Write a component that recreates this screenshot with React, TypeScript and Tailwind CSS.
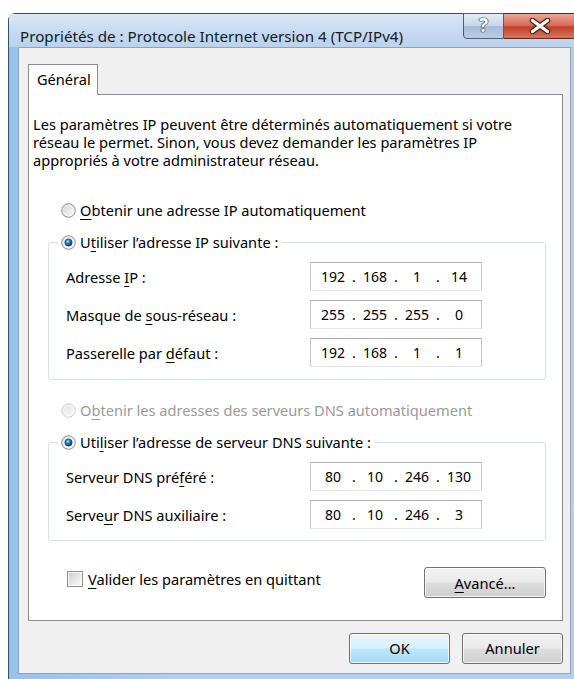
import React from 'react';

// Windows 7 style radio, drawn as a small glossy circle
const Radio: React.FC<{ checked?: boolean; disabled?: boolean }> = ({ checked, disabled }) => (
  <svg width="15" height="15" viewBox="0 0 15 15" className="shrink-0">
    <defs>
      <linearGradient id="radioFace" x1="0" y1="0" x2="1" y2="1">
        <stop offset="0" stopColor="#d2d4d6" />
        <stop offset="1" stopColor="#fbfbfb" />
      </linearGradient>
      <radialGradient id="radioDot" cx="0.4" cy="0.35" r="0.7">
        <stop offset="0" stopColor="#9fe0ff" />
        <stop offset="0.35" stopColor="#2f8cc4" />
        <stop offset="1" stopColor="#0c3350" />
      </radialGradient>
    </defs>
    <circle cx="7.5" cy="7.5" r="6.8" fill="url(#radioFace)" stroke={disabled ? '#c4c6c8' : '#8e9193'} strokeWidth="1" opacity={disabled ? 0.7 : 1} />
    <circle cx="7.5" cy="7.5" r="5.3" fill="none" stroke="#ffffff" strokeOpacity="0.6" strokeWidth="0.8" />
    {checked && <circle cx="7.5" cy="7.5" r="3.6" fill="url(#radioDot)" stroke="#11324e" strokeWidth="0.6" />}
  </svg>
);

const U: React.FC<{ children: React.ReactNode }> = ({ children }) => (
  <span className="underline decoration-1 underline-offset-[3px]">{children}</span>
);

const IpBox: React.FC<{ parts: string[] }> = ({ parts }) => (
  <div className="flex h-[29px] w-[172px] items-center border border-[#c5c8ce] border-t-[#abadb3] border-b-[#e3e9ef] bg-white pl-[5px] text-[14px]">
    {parts.map((p, i) => (
      <React.Fragment key={i}>
        {i > 0 && <span className="w-[8px] text-center">.</span>}
        <span className="w-[34px] text-center">{p}</span>
      </React.Fragment>
    ))}
  </div>
);

const Row: React.FC<{ label: React.ReactNode; parts: string[] }> = ({ label, parts }) => (
  <div className="flex items-center">
    <div className="w-[244px]">{label}</div>
    <IpBox parts={parts} />
  </div>
);

const btn =
  'flex items-center justify-center rounded-[3px] border text-[14.6px] shadow-[inset_0_0_0_1px_rgba(255,255,255,0.75)]';
const grayBtn =
  'border-[#707070] bg-[linear-gradient(to_bottom,#f2f2f2_0%,#ebebeb_48%,#dddddd_52%,#cfcfcf_100%)]';

export default function App() {
  return (
    <div className="h-[679px] w-[574px] overflow-hidden bg-white pl-[8px] pt-[13px] font-['Noto_Sans',sans-serif] text-black">
      {/* window frame */}
      <div className="h-[680px] w-[590px] rounded-tl-[7px] rounded-tr-[7px] border border-[#3e4e62] bg-[linear-gradient(to_right,#98c1ec_0%,#b2cfee_30%,#b4cdea_100%)]">
        {/* title bar */}
        <div className="flex h-[33px] items-start bg-[linear-gradient(to_bottom,#d9e7f6_0%,#c4d9f0_60%,#b9d2ee_100%)]">
          <span className="ml-[11px] mt-[12px] text-[15.2px] leading-[20px] text-[#111a24]">
            Propriétés de : Protocole Internet version 4 (TCP/IPv4)
          </span>
          <div className="ml-auto mr-[21px] mt-[-1px] flex h-[26px]">
            <div className="flex w-[41px] items-center justify-center rounded-bl-[4px] border border-[#4f5e72] bg-[linear-gradient(to_bottom,#e4edf7_0%,#c6d7ea_50%,#a7bdd6_52%,#b9cde3_100%)] pb-[1px] text-[19px] font-bold leading-none text-white [text-shadow:0_0_1px_#26364a,0_0_1px_#26364a,0_0_1px_#26364a,0_0_1px_#26364a]">
              ?
            </div>
            <div className="flex w-[72px] items-center justify-center rounded-br-[4px] border border-l-0 border-[#5a2a22] bg-[linear-gradient(to_bottom,#e9a795_0%,#d9705a_45%,#c3412b_55%,#d6755c_100%)]">
              <svg width="22" height="16" viewBox="0 0 22 16">
                <path d="M3.5 2.5 L18.5 13.5 M18.5 2.5 L3.5 13.5" stroke="#3a1a14" strokeWidth="5.5" strokeLinecap="round" />
                <path d="M3.5 2.5 L18.5 13.5 M18.5 2.5 L3.5 13.5" stroke="#ffffff" strokeWidth="3.4" strokeLinecap="round" />
              </svg>
            </div>
          </div>
        </div>

        {/* client area */}
        <div className="ml-[9px] h-[627px] w-[553px] border border-[#8fa3bb] bg-[#f0f0f0] pl-[9px] pt-[16px] text-[14.6px]">
          <div className="relative z-10 -mb-px flex h-[31px] w-[70px] items-center border border-b-0 border-[#898c95] bg-white pl-[8px]">
            Général
          </div>

          <div className="h-[527px] w-[535px] border border-[#898c95] bg-white pl-[4px] pt-[20px] leading-[18px]">
            <p>
              Les paramètres IP peuvent être déterminés automatiquement si votre
              <br />
              réseau le permet. Sinon, vous devez demander les paramètres IP
              <br />
              appropriés à votre administrateur réseau.
            </p>

            <div className="ml-[28px] mt-[31px] flex h-[20px] items-center gap-[4px]">
              <Radio />
              <span>
                <U>O</U>btenir une adresse IP automatiquement
              </span>
            </div>

            <fieldset className="ml-[15px] mt-[12px] w-[498px] rounded-[3px] border border-[#d5dfe5] pb-[12px] pl-[17px] pt-[10px]">
              <legend className="-ml-[8px] flex h-[20px] items-center gap-[4px] px-[3px]">
                <Radio checked />
                <span>
                  U<U>t</U>iliser l’adresse IP suivante :
                </span>
              </legend>
              <div className="flex flex-col gap-[9px]">
                <Row label={<>Adresse <U>I</U>P :</>} parts={['192', '168', '1', '14']} />
                <Row label={<>Masque de <U>s</U>ous-réseau :</>} parts={['255', '255', '255', '0']} />
                <Row label={<>Passerelle par <U>d</U>éfaut :</>} parts={['192', '168', '1', '1']} />
              </div>
            </fieldset>

            <div className="ml-[28px] mt-[20px] flex h-[20px] items-center gap-[4px] text-[#9a9a9a]">
              <Radio disabled />
              <span>
                O<U>b</U>tenir les adresses des serveurs DNS automatiquement
              </span>
            </div>

            <fieldset className="ml-[15px] mt-[12px] w-[498px] rounded-[3px] border border-[#d5dfe5] pb-[11px] pl-[17px] pt-[10px]">
              <legend className="-ml-[8px] flex h-[20px] items-center gap-[4px] px-[3px]">
                <Radio checked />
                <span>
                  Uti<U>l</U>iser l’adresse de serveur DNS suivante :
                </span>
              </legend>
              <div className="flex flex-col gap-[9px]">
                <Row label={<>Serveur DNS pré<U>f</U>éré :</>} parts={['80', '10', '246', '130']} />
                <Row label={<>Serve<U>u</U>r DNS auxiliaire :</>} parts={['80', '10', '246', '3']} />
              </div>
            </fieldset>

            <div className="mt-[26px] flex items-start">
              <div className="ml-[34px] mt-[3px] flex items-center gap-[5px]">
                <span className="h-[16px] w-[16px] border border-[#8e8f8f] bg-[linear-gradient(135deg,#c9ccd1_0%,#eeeeee_70%,#f7f7f7_100%)] shadow-[inset_0_0_0_1px_rgba(255,255,255,0.8)]" />
                <span>
                  <U>V</U>alider les paramètres en quittant
                </span>
              </div>
              <div className={`${btn} ${grayBtn} ml-auto mr-[16px] h-[31px] w-[122px]`}>
                <U>A</U>vancé...
              </div>
            </div>
          </div>

          <div className="mt-[12px] flex w-[535px] justify-end gap-[12px]">
            <div className={`${btn} h-[31px] w-[101px] border-[#3c7fb1] bg-[linear-gradient(to_bottom,#eaf6fd_0%,#d9f0fc_48%,#bee6fd_52%,#a7d9f5_100%)]`}>
              OK
            </div>
            <div className={`${btn} ${grayBtn} h-[31px] w-[101px]`}>Annuler</div>
          </div>
        </div>
      </div>
    </div>
  );
}
